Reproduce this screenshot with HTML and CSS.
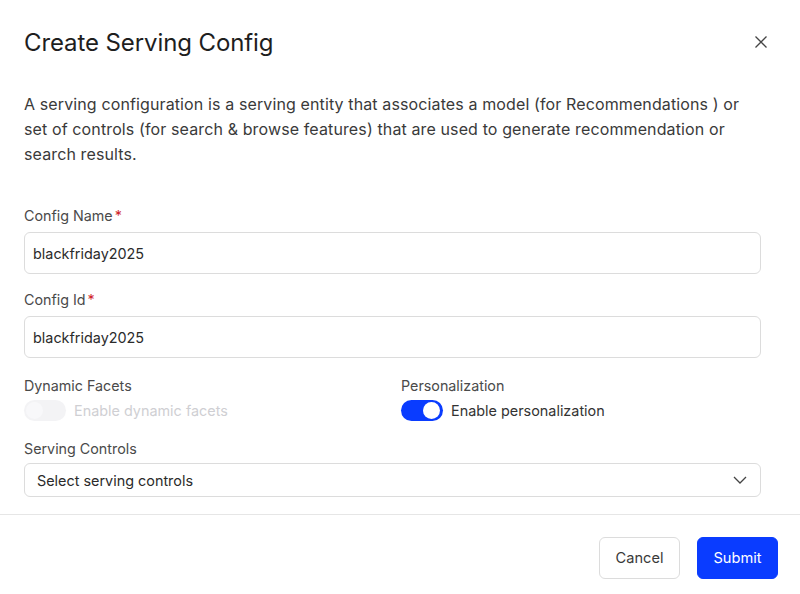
FILE: index.html
```html
<!DOCTYPE html>
<html lang="en">
<head>
<meta charset="utf-8">
<title>Create Serving Config</title>
<link rel="stylesheet" href="styles.css">
</head>
<body>
<div class="modal">
  <div class="header">
    <h1 class="title">Create Serving Config</h1>
    <button class="close" aria-label="Close">
      <svg width="14" height="14" viewBox="0 0 14 14"><path d="M1.5 1.5L12.5 12.5M12.5 1.5L1.5 12.5" stroke="#444" stroke-width="1.3" fill="none"/></svg>
    </button>
  </div>
  <div class="body">
    <p class="desc">A serving configuration is a serving entity that associates a model (for Recommendations ) or set of controls (for search &amp; browse features) that are used to generate recommendation or search results.</p>
    <div class="field">
      <label class="label">Config Name<span class="req">*</span></label>
      <div class="input">blackfriday2025</div>
    </div>
    <div class="field">
      <label class="label">Config Id<span class="req">*</span></label>
      <div class="input">blackfriday2025</div>
    </div>
    <div class="row">
      <div class="col">
        <div class="label">Dynamic Facets</div>
        <div class="switch-row disabled">
          <span class="switch off"><span class="knob"></span></span>
          <span class="switch-text">Enable dynamic facets</span>
        </div>
      </div>
      <div class="col">
        <div class="label">Personalization</div>
        <div class="switch-row">
          <span class="switch on"><span class="knob"></span></span>
          <span class="switch-text">Enable personalization</span>
        </div>
      </div>
    </div>
    <div class="field last">
      <div class="label">Serving Controls</div>
      <div class="select">
        <span>Select serving controls</span>
        <svg width="14" height="8" viewBox="0 0 14 8"><path d="M1 1L7 7L13 1" stroke="#444" stroke-width="1.3" fill="none"/></svg>
      </div>
    </div>
  </div>
  <div class="footer">
    <button class="btn cancel">Cancel</button>
    <button class="btn submit">Submit</button>
  </div>
</div>
</body>
</html>
```
FILE: styles.css
```css
* { box-sizing: border-box; }
html, body { margin: 0; padding: 0; background: #fff; }
body {
  font-family: Inter, "Noto Sans", "Liberation Sans", sans-serif;
  color: #2b2b2b;
  width: 800px;
  height: 594px;
  overflow: hidden;
}
.modal { width: 800px; height: 594px; background: #fff; display: flex; flex-direction: column; }
.header {
  display: flex;
  align-items: center;
  justify-content: space-between;
  padding: 28px 32px 0 24px;
  height: 56px;
}
.title {
  margin: 0;
  font-size: 24px;
  font-weight: 400;
  color: #1e1e1e;
  letter-spacing: -0.1px;
}
.close {
  border: 0;
  background: none;
  padding: 0;
  width: 14px;
  height: 14px;
  display: flex;
}
.body { padding: 0 39px 0 24px; }
.desc {
  margin: 36px 0 0;
  font-size: 16px;
  line-height: 25px;
  color: #3a3a3a;
  width: 740px;
  letter-spacing: 0.12px;
}
.field { margin-top: 40px; }
.field + .field { margin-top: 17px; }
.label {
  display: block;
  font-size: 14.3px;
  line-height: 18px;
  color: #4a4a4a;
  margin-bottom: 7px;
}
.req { color: #d0262d; margin-left: 2px; }
.input {
  height: 42px;
  border: 1px solid #dcdcdc;
  border-radius: 6px;
  padding: 0 8px;
  display: flex;
  align-items: center;
  font-size: 14.4px;
  color: #2b2b2b;
}
.row { display: flex; margin-top: 19px; }
.col { flex: 0 0 377px; }
.col .label { margin-bottom: 5px; }
.switch-row { display: flex; align-items: center; gap: 8px; }
.switch {
  width: 42px;
  height: 21px;
  border-radius: 11px;
  position: relative;
  display: inline-block;
}
.switch.on { background: #0a3cff; }
.switch.off { background: #f3f3f5; }
.knob {
  position: absolute;
  top: 2px;
  width: 17px;
  height: 17px;
  border-radius: 50%;
  background: #fff;
}
.switch.on .knob { right: 3px; }
.switch.off .knob { left: 2px; background: #f8f8fa; }
.switch-text { font-size: 14.4px; color: #333; }
.disabled .switch-text { color: #cfcfd3; }
.field.last { margin-top: 19px; }
.field.last .label { margin-bottom: 5px; }
.select {
  height: 34px;
  border: 1px solid #dcdcdc;
  border-radius: 6px;
  padding: 0 13px 0 12px;
  display: flex;
  align-items: center;
  justify-content: space-between;
  font-size: 14.4px;
  color: #2b2b2b;
}
.footer {
  margin-top: 17px;
  border-top: 1px solid #e6e6e6;
  display: flex;
  justify-content: flex-end;
  gap: 17px;
  padding: 22px 22px 0 0;
}
.btn {
  height: 42px;
  border-radius: 6px;
  font-family: inherit;
  font-size: 14.6px;
  padding: 0;
}
.cancel { width: 81px; background: #fff; border: 1px solid #dcdcdc; color: #3a3a3a; }
.submit { width: 81px; background: #0a3cff; border: 1px solid #0a3cff; color: #fff; }
```
